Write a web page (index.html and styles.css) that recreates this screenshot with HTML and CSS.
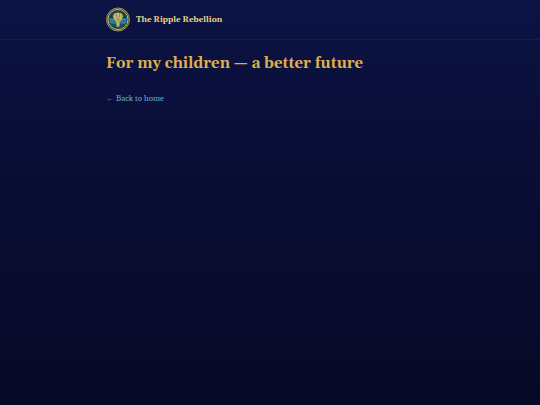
FILE: index.html
```html
<!DOCTYPE html>
<html lang="en">
<head>
    <meta charset="UTF-8">
    <title>For my children — a better future</title>
    <meta name="viewport" content="width=device-width, initial-scale=1.0">
    <link rel="stylesheet" href="styles.css">
</head>
<body>
    <header class="site-header">
        <div class="wrap">
            <a class="brand" href="index.html">
                <svg class="brand-logo" viewBox="0 0 48 48" aria-hidden="true">
                    <circle cx="24" cy="24" r="23" fill="#3c4038" stroke="#9c9055" stroke-width="2"/>
                    <circle cx="24" cy="24" r="20" fill="#173f4c" stroke="#cbb964" stroke-width="2"/>
                    <!-- Water -->
                    <path d="M6 21h36a18 18 0 0 1-36 3z" fill="#226f8a"/>
                    <path d="M7 24q4-2 8 0t8 0 8 0 9 0M7 29q4-2 8 0t8 0 8 0 9 0" fill="none" stroke="#4a9fb4" stroke-width="1.5"/>
                    <path d="M10 33h28q-5 9-14 9t-14-9z" fill="#1b4e5c"/>
                    <!-- Tree -->
                    <path d="M21 38v-9l-6-6 2-3 4 4V13h6v11l4-4 2 3-6 6v9z" fill="#cdb55c"/>
                    <path d="M14 19q-2-4 2-6 2-4 5-2 3-3 6 0 4-2 5 2 4 2 2 6l-6 6h-8z" fill="#a99c4c"/>
                    <path d="M18 13l3 8M24 11v10M30 13l-3 8M15 18l6 5M33 18l-6 5" stroke="#e6d07a" stroke-width="2"/>
                    <path d="M20 15l2 5M28 15l-2 5M25 24v5" stroke="#4f5c34" stroke-width="1"/>
                </svg>
                <span class="brand-name">The Ripple Rebellion</span>
            </a>
        </div>
    </header>
    <main class="wrap content">
        <h1>For my children — a better future</h1>
        <p><a class="back-link" href="index.html"><span class="arrow">←</span> Back to home</a></p>
    </main>
</body>
</html>
```
FILE: styles.css
```css
* {
    box-sizing: border-box;
}
html {
    min-height: 100%;
    background: linear-gradient(180deg, #0c1445 0%, #0a0e37 35%, #060926 100%);
}
body {
    margin: 0;
    font-family: Gelasio, Georgia, "Liberation Serif", serif;
    font-size: 8px;
    line-height: 14px;
    color: #f0d68a;
}
.wrap {
    max-width: 340px;
    margin: 0 auto;
    padding: 0 6px;
}
/* Header */
.site-header {
    padding: 7px 0;
    border-bottom: 1px solid #151e4a;
}
.brand {
    display: inline-flex;
    align-items: center;
    gap: 6px;
    vertical-align: top;
    color: #f0d68a;
    font-weight: bold;
    text-decoration: none;
}
.brand-logo {
    width: 24px;
    height: 25px;
}
/* Page */
.content {
    padding-top: 14px;
}
.content h1 {
    margin: 0;
    color: #dfb04f;
    font-size: 15px;
    line-height: 20px;
}
.content p {
    margin: 18px 0 0;
}
.back-link {
    color: #5fb0cb;
    text-decoration: none;
}
.back-link:hover {
    text-decoration: underline;
}
.arrow {
    font-family: "Liberation Serif", serif;
}
```
